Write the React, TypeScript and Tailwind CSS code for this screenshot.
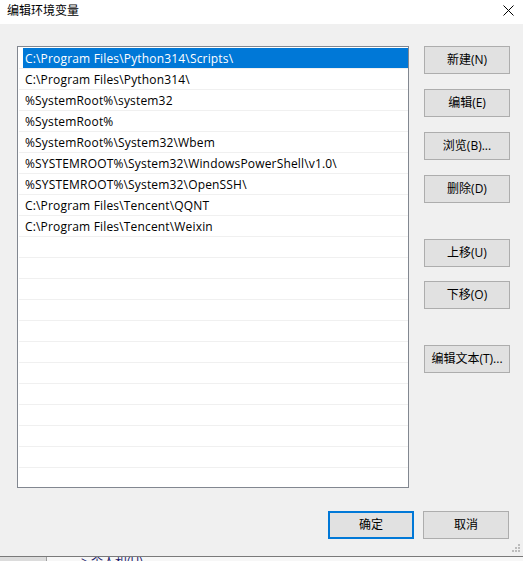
import React from "react";

const paths = [
  "C:\\Program Files\\Python314\\Scripts\\",
  "C:\\Program Files\\Python314\\",
  "%SystemRoot%\\system32",
  "%SystemRoot%",
  "%SystemRoot%\\System32\\Wbem",
  "%SYSTEMROOT%\\System32\\WindowsPowerShell\\v1.0\\",
  "%SYSTEMROOT%\\System32\\OpenSSH\\",
  "C:\\Program Files\\Tencent\\QQNT",
  "C:\\Program Files\\Tencent\\Weixin",
];

const TOTAL_ROWS = 20;

const font = {
  fontFamily: '"Segoe UI", "Open Sans", "Noto Sans CJK SC", sans-serif',
};

function Btn({ label, className = "" }: { label: string; className?: string }) {
  return (
    <button
      className={
        "w-[86px] h-[28px] bg-[#e1e1e1] border border-[#adadad] text-[12px] text-black flex items-center justify-center leading-none " +
        className
      }
    >
      {label}
    </button>
  );
}

export default function App() {
  const rows = Array.from({ length: TOTAL_ROWS }, (_, i) => paths[i] ?? "");
  return (
    <div
      className="w-[523px] h-[561px] bg-[#f0f0f0] flex flex-col overflow-hidden relative"
      style={font}
    >
      {/* title bar */}
      <div className="h-[24px] bg-white flex items-center justify-between pl-[7px] pr-[9px] shrink-0">
        <span className="text-[12px] text-black leading-none mt-[-2px]">编辑环境变量</span>
        <svg width="11" height="11" viewBox="0 0 11 11" className="mt-[-4px]">
          <path d="M0.5 0.5 L10.5 10.5 M10.5 0.5 L0.5 10.5" stroke="#000" strokeWidth="1" />
        </svg>
      </div>

      {/* body */}
      <div className="flex pl-[17px] pt-[22px] shrink-0">
        {/* path list */}
        <div className="w-[392px] h-[442px] bg-white border border-[#828790] pt-[1px] overflow-hidden">
          {rows.map((p, i) => (
            <div key={i} className="h-[21px] pl-[1px] flex flex-col">
              <div
                className={
                  "h-[20px] ml-[4px] pl-[2px] pt-[2px] flex items-center text-[12px] tracking-[0.17px] leading-none whitespace-nowrap " +
                  (i === 0 ? "bg-[#0078d7] text-white" : "text-black")
                }
              >
                {p}
              </div>
              <div className="h-[1px] bg-[#f0f0f0]" />
            </div>
          ))}
        </div>

        {/* action buttons */}
        <div className="ml-[15px] flex flex-col">
          <Btn label="新建(N)" />
          <Btn label="编辑(E)" className="mt-[15px]" />
          <Btn label="浏览(B)..." className="mt-[15px]" />
          <Btn label="删除(D)" className="mt-[15px]" />
          <Btn label="上移(U)" className="mt-[36px]" />
          <Btn label="下移(O)" className="mt-[14px]" />
          <Btn label="编辑文本(T)..." className="mt-[36px]" />
        </div>
      </div>

      {/* dialog buttons */}
      <div className="flex justify-end pr-[14px] pt-[23px] gap-[9px] shrink-0">
        <button className="w-[86px] h-[28px] bg-[#e1e1e1] border-2 border-[#0078d7] text-[12px] text-black flex items-center justify-center leading-none">
          确定
        </button>
        <Btn label="取消" />
      </div>

      {/* size grip */}
      <svg
        width="8"
        height="8"
        viewBox="0 0 8 8"
        className="absolute right-[3px] bottom-[9px]"
      >
        <rect x="6" y="0" width="2" height="2" fill="#bcbcbc" />
        <rect x="3" y="3" width="2" height="2" fill="#bcbcbc" />
        <rect x="6" y="3" width="2" height="2" fill="#bcbcbc" />
        <rect x="0" y="6" width="2" height="2" fill="#bcbcbc" />
        <rect x="3" y="6" width="2" height="2" fill="#bcbcbc" />
        <rect x="6" y="6" width="2" height="2" fill="#bcbcbc" />
      </svg>

      {/* window beneath, peeking out */}
      <div className="absolute left-0 right-0 bottom-0 h-[5px] border-t border-[#7a7a7a] flex overflow-hidden">
        <div className="w-[47px] bg-[#dcdcdc] border-r border-[#a0a0a0]" />
        <div className="flex-1 bg-[#f7f7f7] relative overflow-hidden">
          <span className="absolute left-[34px] top-[-1px] text-[12px] leading-none text-[#1a1a6a]">
            &gt; 个人和(U)
          </span>
        </div>
      </div>
    </div>
  );
}
